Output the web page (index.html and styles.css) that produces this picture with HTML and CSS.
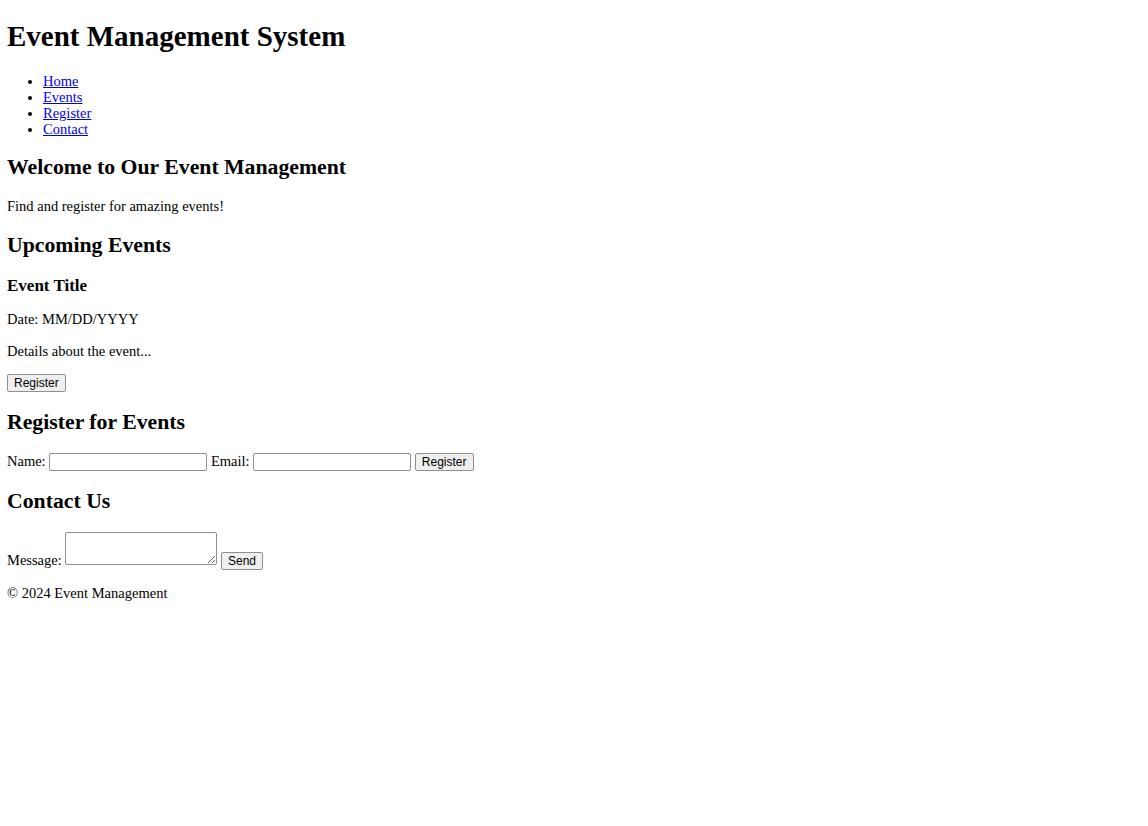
FILE: index.html
```html
<!DOCTYPE html>
<html lang="en">
<head>
    <meta charset="UTF-8">
    <meta name="viewport" content="width=device-width, initial-scale=1.0">
    <title>Event Management System</title>
    <link rel="stylesheet" href="styles.css">
</head>
<body>
    <header>
        <h1>Event Management System</h1>
        <nav>
            <ul class="nav-list">
                <li><a href="#home">Home</a></li>
                <li><a href="#events">Events</a></li>
                <li><a href="#register">Register</a></li>
                <li><a href="#contact">Contact</a></li>
            </ul>
        </nav>
    </header>

    <section id="home">
        <h2>Welcome to Our Event Management</h2>
        <p>Find and register for amazing events!</p>
    </section>

    <section id="events">
        <h2>Upcoming Events</h2>
        <div class="event">
            <h3>Event Title</h3>
            <p>Date: MM/DD/YYYY</p>
            <p>Details about the event...</p>
            <button class="btn">Register</button>
        </div>
    </section>

    <section id="register">
        <h2>Register for Events</h2>
        <form class="form-row">
            <label for="name">Name:</label>
            <input type="text" id="name" class="field">
            <label for="email">Email:</label>
            <input type="email" id="email" class="field">
            <button type="submit" class="btn">Register</button>
        </form>
    </section>

    <section id="contact">
        <h2>Contact Us</h2>
        <form class="form-row">
            <label for="message">Message:</label>
            <textarea id="message" class="message"></textarea>
            <button type="submit" class="btn">Send</button>
        </form>
    </section>

    <footer>
        <p>&copy; 2024 Event Management</p>
    </footer>
</body>
</html>
```

FILE: styles.css
```css
body {
    margin: 7px;
    font-family: "Liberation Serif", "Times New Roman", serif;
    font-size: 14.5px;
    color: #000;
}
h1 {
    font-size: 29px;
    margin: 13px 0 20px;
}
h2 {
    font-size: 21.75px;
    margin: 18px 0;
}
h3 {
    font-size: 17px;
    margin: 17px 0 15px;
}
p {
    margin: 14.5px 0;
}
.nav-list {
    margin: 14.5px 0;
    padding-left: 36px;
    line-height: 16px;
}
a {
    color: #0000ee;
}
.btn {
    height: 18px;
    font-family: "Liberation Sans", Arial, sans-serif;
    font-size: 12px;
    padding: 0 6px;
    border: 1px solid #8f8f8f;
    border-radius: 2px;
    background-color: #efefef;
    color: #000;
}
.field {
    box-sizing: border-box;
    width: 158px;
    height: 18px;
    padding: 1px 2px;
    border: 1px solid #8f8f8f;
    border-radius: 2px;
    font-size: 12px;
}
.message {
    box-sizing: border-box;
    width: 152px;
    height: 33px;
    padding: 2px;
    border: 1px solid #8f8f8f;
    border-radius: 2px;
    font-size: 12px;
    vertical-align: baseline;
}
```
